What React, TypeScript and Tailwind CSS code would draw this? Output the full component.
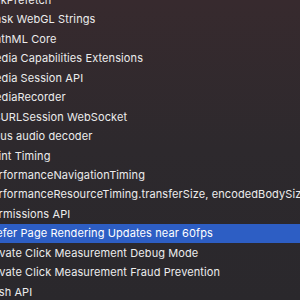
import React from "react";

const items = [
  "LinkPrefetch",
  "Mask WebGL Strings",
  "MathML Core",
  "Media Capabilities Extensions",
  "Media Session API",
  "MediaRecorder",
  "NSURLSession WebSocket",
  "Opus audio decoder",
  "Paint Timing",
  "PerformanceNavigationTiming",
  "PerformanceResourceTiming.transferSize, encodedBodySize, and decodedBodySize",
  "Permissions API",
  "Prefer Page Rendering Updates near 60fps",
  "Private Click Measurement Debug Mode",
  "Private Click Measurement Fraud Prevention",
  "Push API",
];

const selected = "Prefer Page Rendering Updates near 60fps";

export default function App() {
  return (
    <div
      className="w-[300px] h-[300px] overflow-hidden bg-gradient-to-b from-[#372a2e] via-[#2d292d] to-[#2a282c] text-[#ececec] text-[11px] tracking-[0.1px]"
      style={{ fontFamily: "Inter, 'Liberation Sans', sans-serif" }}
    >
      <ul className="-mt-[9.7px] flex flex-col">
        {items.map((label) => (
          <li
            key={label}
            className={
              label === selected
                ? "h-[19.47px] flex items-center bg-[#2d5ec4] text-white whitespace-nowrap"
                : "h-[19.47px] flex items-center whitespace-nowrap"
            }
          >
            <span className="-ml-[15px]">{label}</span>
          </li>
        ))}
      </ul>
    </div>
  );
}
